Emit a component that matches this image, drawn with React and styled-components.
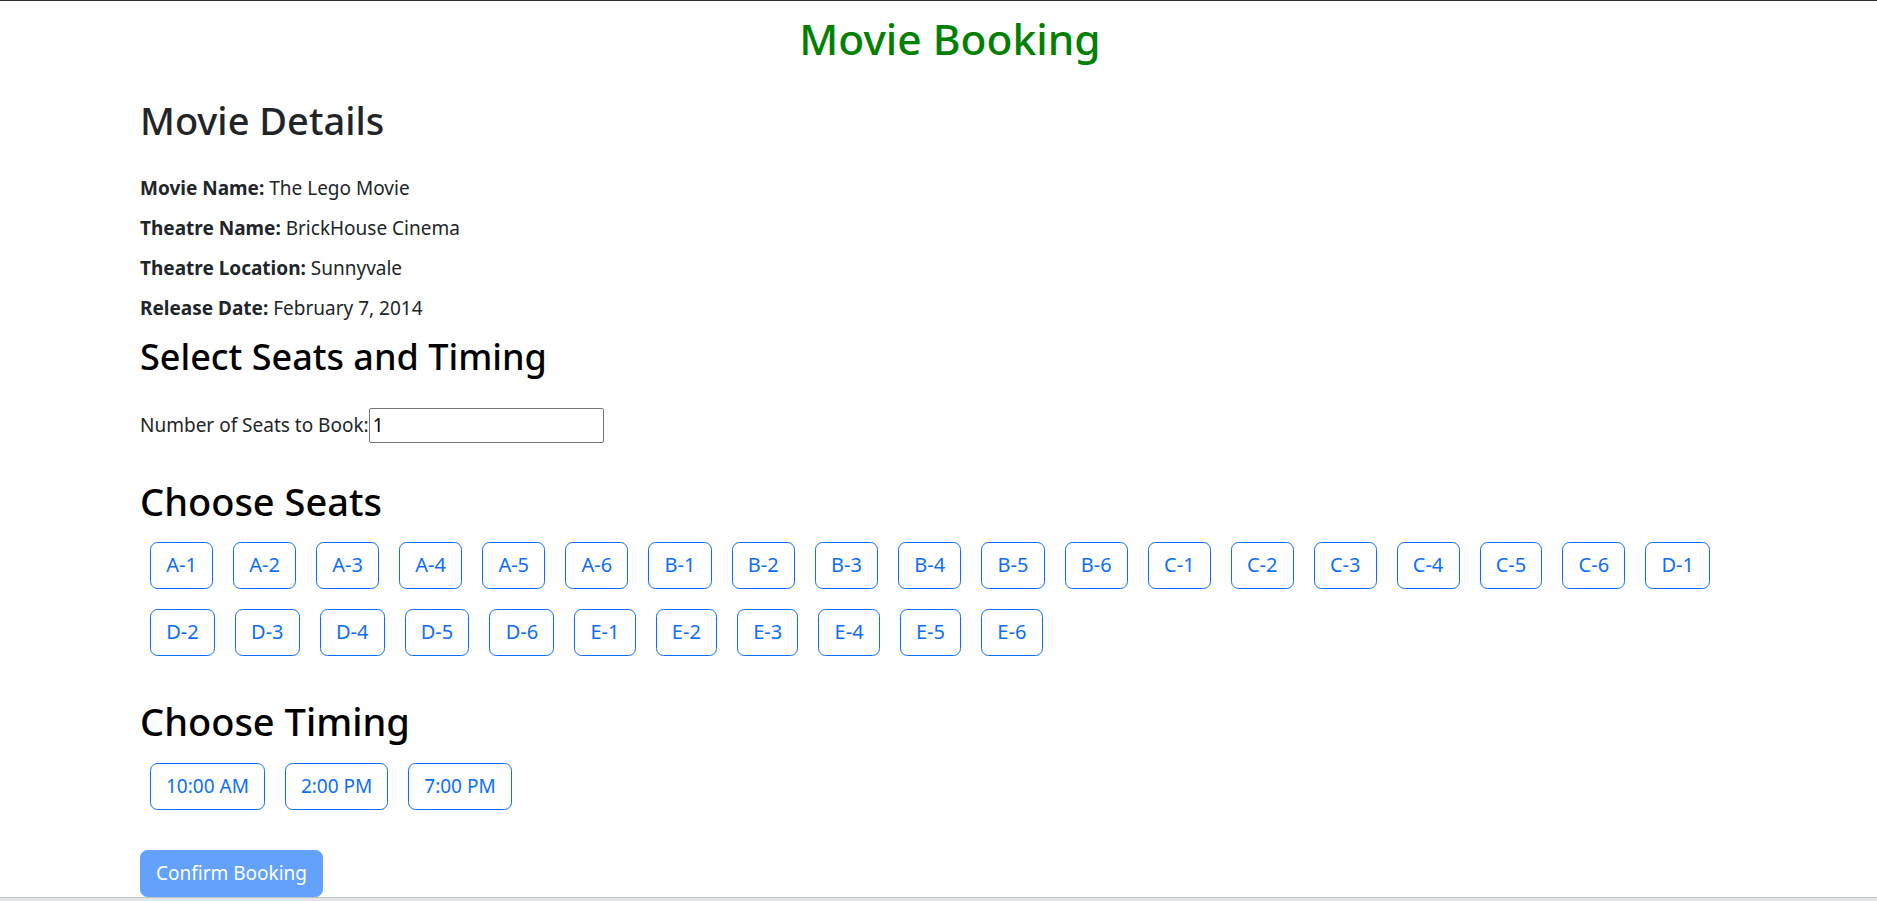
import React from 'react';
import styled, { createGlobalStyle } from 'styled-components';

const GlobalStyle = createGlobalStyle`
  html, body {
    margin: 0;
    padding: 0;
    background: #fff;
  }

  body {
    border-top: 1px solid #2b2f36;
    color: #212529;
    font-family: "Noto Sans", "Open Sans", sans-serif;
    font-size: 19px;
    line-height: 30px;
  }
`;

const Page = styled.div`
  padding: 12px 140px 40px;
`;

const Title = styled.h1`
  color: #008000;
  font-size: 42.5px;
  font-weight: 500;
  line-height: 52.8px;
  margin: 0;
  padding-left: 23px;
  text-align: center;
`;

const Heading = styled.h2`
  color: ${(p) => (p.$muted ? '#212529' : '#000')};
  font-size: ${(p) => p.$size || '38px'};
  font-weight: 500;
  line-height: 48px;
  margin: ${(p) => p.$margin || '0'};
`;

const Detail = styled.p`
  margin: 0 0 10px;
`;

const Label = styled.strong`
  font-weight: 700;
`;

const SeatsRow = styled.div`
  align-items: center;
  display: flex;
  height: 35px;
  margin-top: 27px;
`;

const NumberInput = styled.input`
  border: 1px solid #767676;
  border-radius: 2px;
  box-sizing: border-box;
  color: #000;
  font-family: inherit;
  font-size: 19px;
  height: 35px;
  padding: 0 3px;
  width: 235px;
`;

const ButtonGrid = styled.div`
  display: flex;
  flex-wrap: wrap;
  margin-top: ${(p) => p.$top || '0'};
`;

const OutlineButton = styled.button`
  background: #fff;
  border: 1px solid #0d6efd;
  border-radius: 7.5px;
  color: #0d6efd;
  cursor: pointer;
  font-family: inherit;
  font-size: ${(p) => p.$size || '20px'};
  line-height: 30px;
  margin: 10px;
  padding: 7.5px ${(p) => p.$padX || '15px'};
`;

const ConfirmButton = styled.button`
  background: #62a1fe;
  border: 1px solid #62a1fe;
  border-radius: 7.5px;
  color: #fff;
  font-family: inherit;
  font-size: 19px;
  line-height: 30px;
  margin-top: 30px;
  padding: 7.5px 15px;
`;

const BottomBar = styled.div`
  background: #e3e6e6;
  border-top: 1px solid #bfc3c3;
  bottom: 0;
  height: 3px;
  left: 0;
  position: fixed;
  right: 0;
`;

const details = [
  ['Movie Name:', 'The Lego Movie'],
  ['Theatre Name:', 'BrickHouse Cinema'],
  ['Theatre Location:', 'Sunnyvale'],
  ['Release Date:', 'February 7, 2014'],
];

const seats = ['A', 'B', 'C', 'D', 'E'].flatMap((row) =>
  [1, 2, 3, 4, 5, 6].map((n) => `${row}-${n}`)
);

const timings = ['10:00 AM', '2:00 PM', '7:00 PM'];

export default function App() {
  return (
    <>
      <GlobalStyle />
      <Page>
        <Title>Movie Booking</Title>
        <Heading $muted $margin="30px 0 29px">
          Movie Details
        </Heading>
        {details.map(([label, value]) => (
          <Detail key={label}>
            <Label>{label}</Label> {value}
          </Detail>
        ))}
        <Heading $size="36px">Select Seats and Timing</Heading>
        <SeatsRow>
          Number of Seats to Book:
          <NumberInput type="number" defaultValue="1" />
        </SeatsRow>
        <Heading $margin="34px 0 0">Choose Seats</Heading>
        <ButtonGrid $top="7px">
          {seats.map((seat) => (
            <OutlineButton key={seat} $padX="15.2px">
              {seat}
            </OutlineButton>
          ))}
        </ButtonGrid>
        <Heading $margin="31px 0 0">Choose Timing</Heading>
        <ButtonGrid $top="8px">
          {timings.map((time) => (
            <OutlineButton key={time} $size="19px">
              {time}
            </OutlineButton>
          ))}
        </ButtonGrid>
        <ConfirmButton disabled>Confirm Booking</ConfirmButton>
      </Page>
      <BottomBar />
    </>
  );
}
